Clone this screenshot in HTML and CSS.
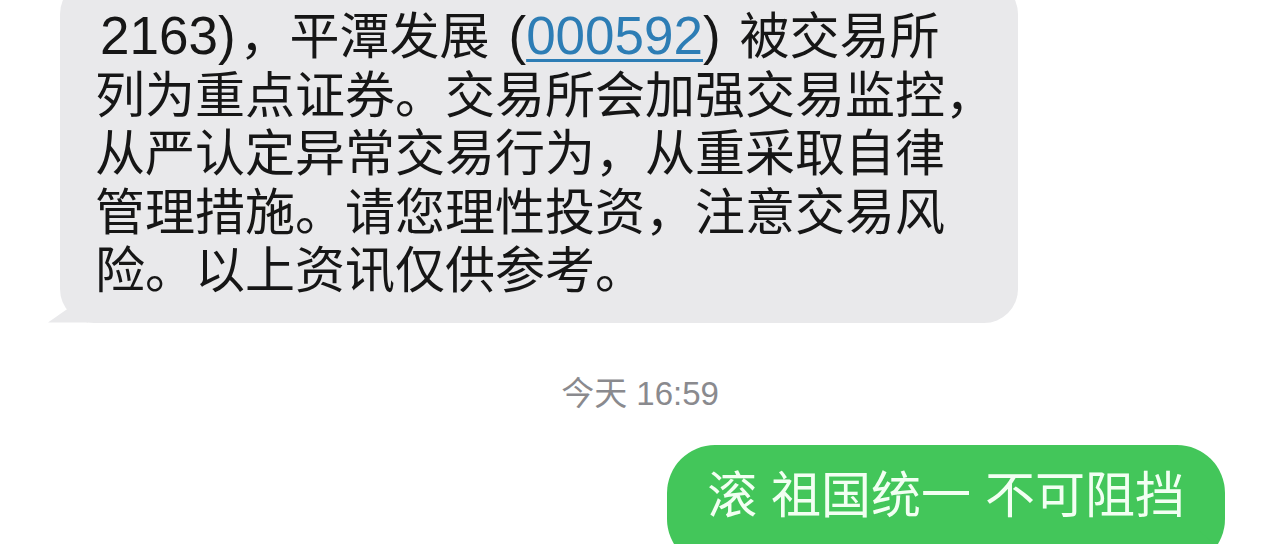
FILE: index.html
```html
<!DOCTYPE html>
<html lang="zh-CN">
<head>
<meta charset="utf-8">
<link rel="stylesheet" href="styles.css">
</head>
<body>
<div class="chat">
  <div class="row row-in">
    <div class="bubble bubble-in">
      <p class="msg"><span class="first"><span class="lat lat-num">2163)</span>，平潭发展 <span class="lat">(<span class="link">000592</span>)</span> 被交易所</span><br>列为重点证券。交易所会加强交易监控，<br>从严认定异常交易行为，从重采取自律<br>管理措施。请您理性投资，注意交易风<br>险。以上资讯仅供参考。</p>
    </div>
  </div>
  <div class="stamp">今天 16:59</div>
  <div class="row row-out">
    <div class="bubble bubble-out">
      <p class="msg-out">滚 祖国统一 不可阻挡</p>
    </div>
  </div>
</div>
</body>
</html>
```
FILE: styles.css
```css
html, body {
  margin: 0;
  padding: 0;
  background: #ffffff;
  overflow: hidden;
}
body {
  width: 1280px;
  height: 544px;
  font-family: "Liberation Sans", "Noto Sans CJK SC", sans-serif;
}
.chat {
  display: flex;
  flex-direction: column;
}
.row {
  display: flex;
}
.row-in {
  margin-top: -20px;
  padding-left: 60px;
}
.bubble {
  position: relative;
}
.bubble-in {
  width: 958px;
  box-sizing: border-box;
  background: #e9e9eb;
  border-radius: 34px;
  padding: 27px 10px 22px 35px;
}
.bubble-in::before {
  content: "";
  position: absolute;
  left: -12px;
  bottom: 0;
  width: 40px;
  height: 28px;
  background: #e9e9eb;
  clip-path: polygon(0 100%, 100% 0, 100% 100%);
}
.msg {
  margin: 0;
  font-size: 50px;
  line-height: 58.5px;
  color: #161616;
  white-space: nowrap;
}
.first {
  word-spacing: 5px;
}
.lat {
  font-size: 53px;
}
.lat-num {
  margin-left: 5px;
  margin-right: 4px;
}
.link {
  color: #2d7db5;
  text-decoration: underline;
  text-decoration-thickness: 3px;
  text-underline-offset: 5px;
}
.stamp {
  margin-top: 49px;
  text-align: center;
  font-size: 33px;
  line-height: 44px;
  color: #8a8a8e;
}
.row-out {
  justify-content: flex-end;
  padding-right: 55px;
  margin-top: 29px;
}
.bubble-out {
  background: #43c65a;
  border-radius: 48px;
  padding: 20px 40px 40px 40px;
}
.bubble-out::after {
  content: "";
  position: absolute;
  right: -14px;
  bottom: 0;
  width: 40px;
  height: 36px;
  background: #43c65a;
  clip-path: polygon(0 0, 100% 100%, 0 100%);
}
.msg-out {
  margin: 0;
  font-size: 50px;
  line-height: 62px;
  color: #f2fff2;
  white-space: nowrap;
}
```
